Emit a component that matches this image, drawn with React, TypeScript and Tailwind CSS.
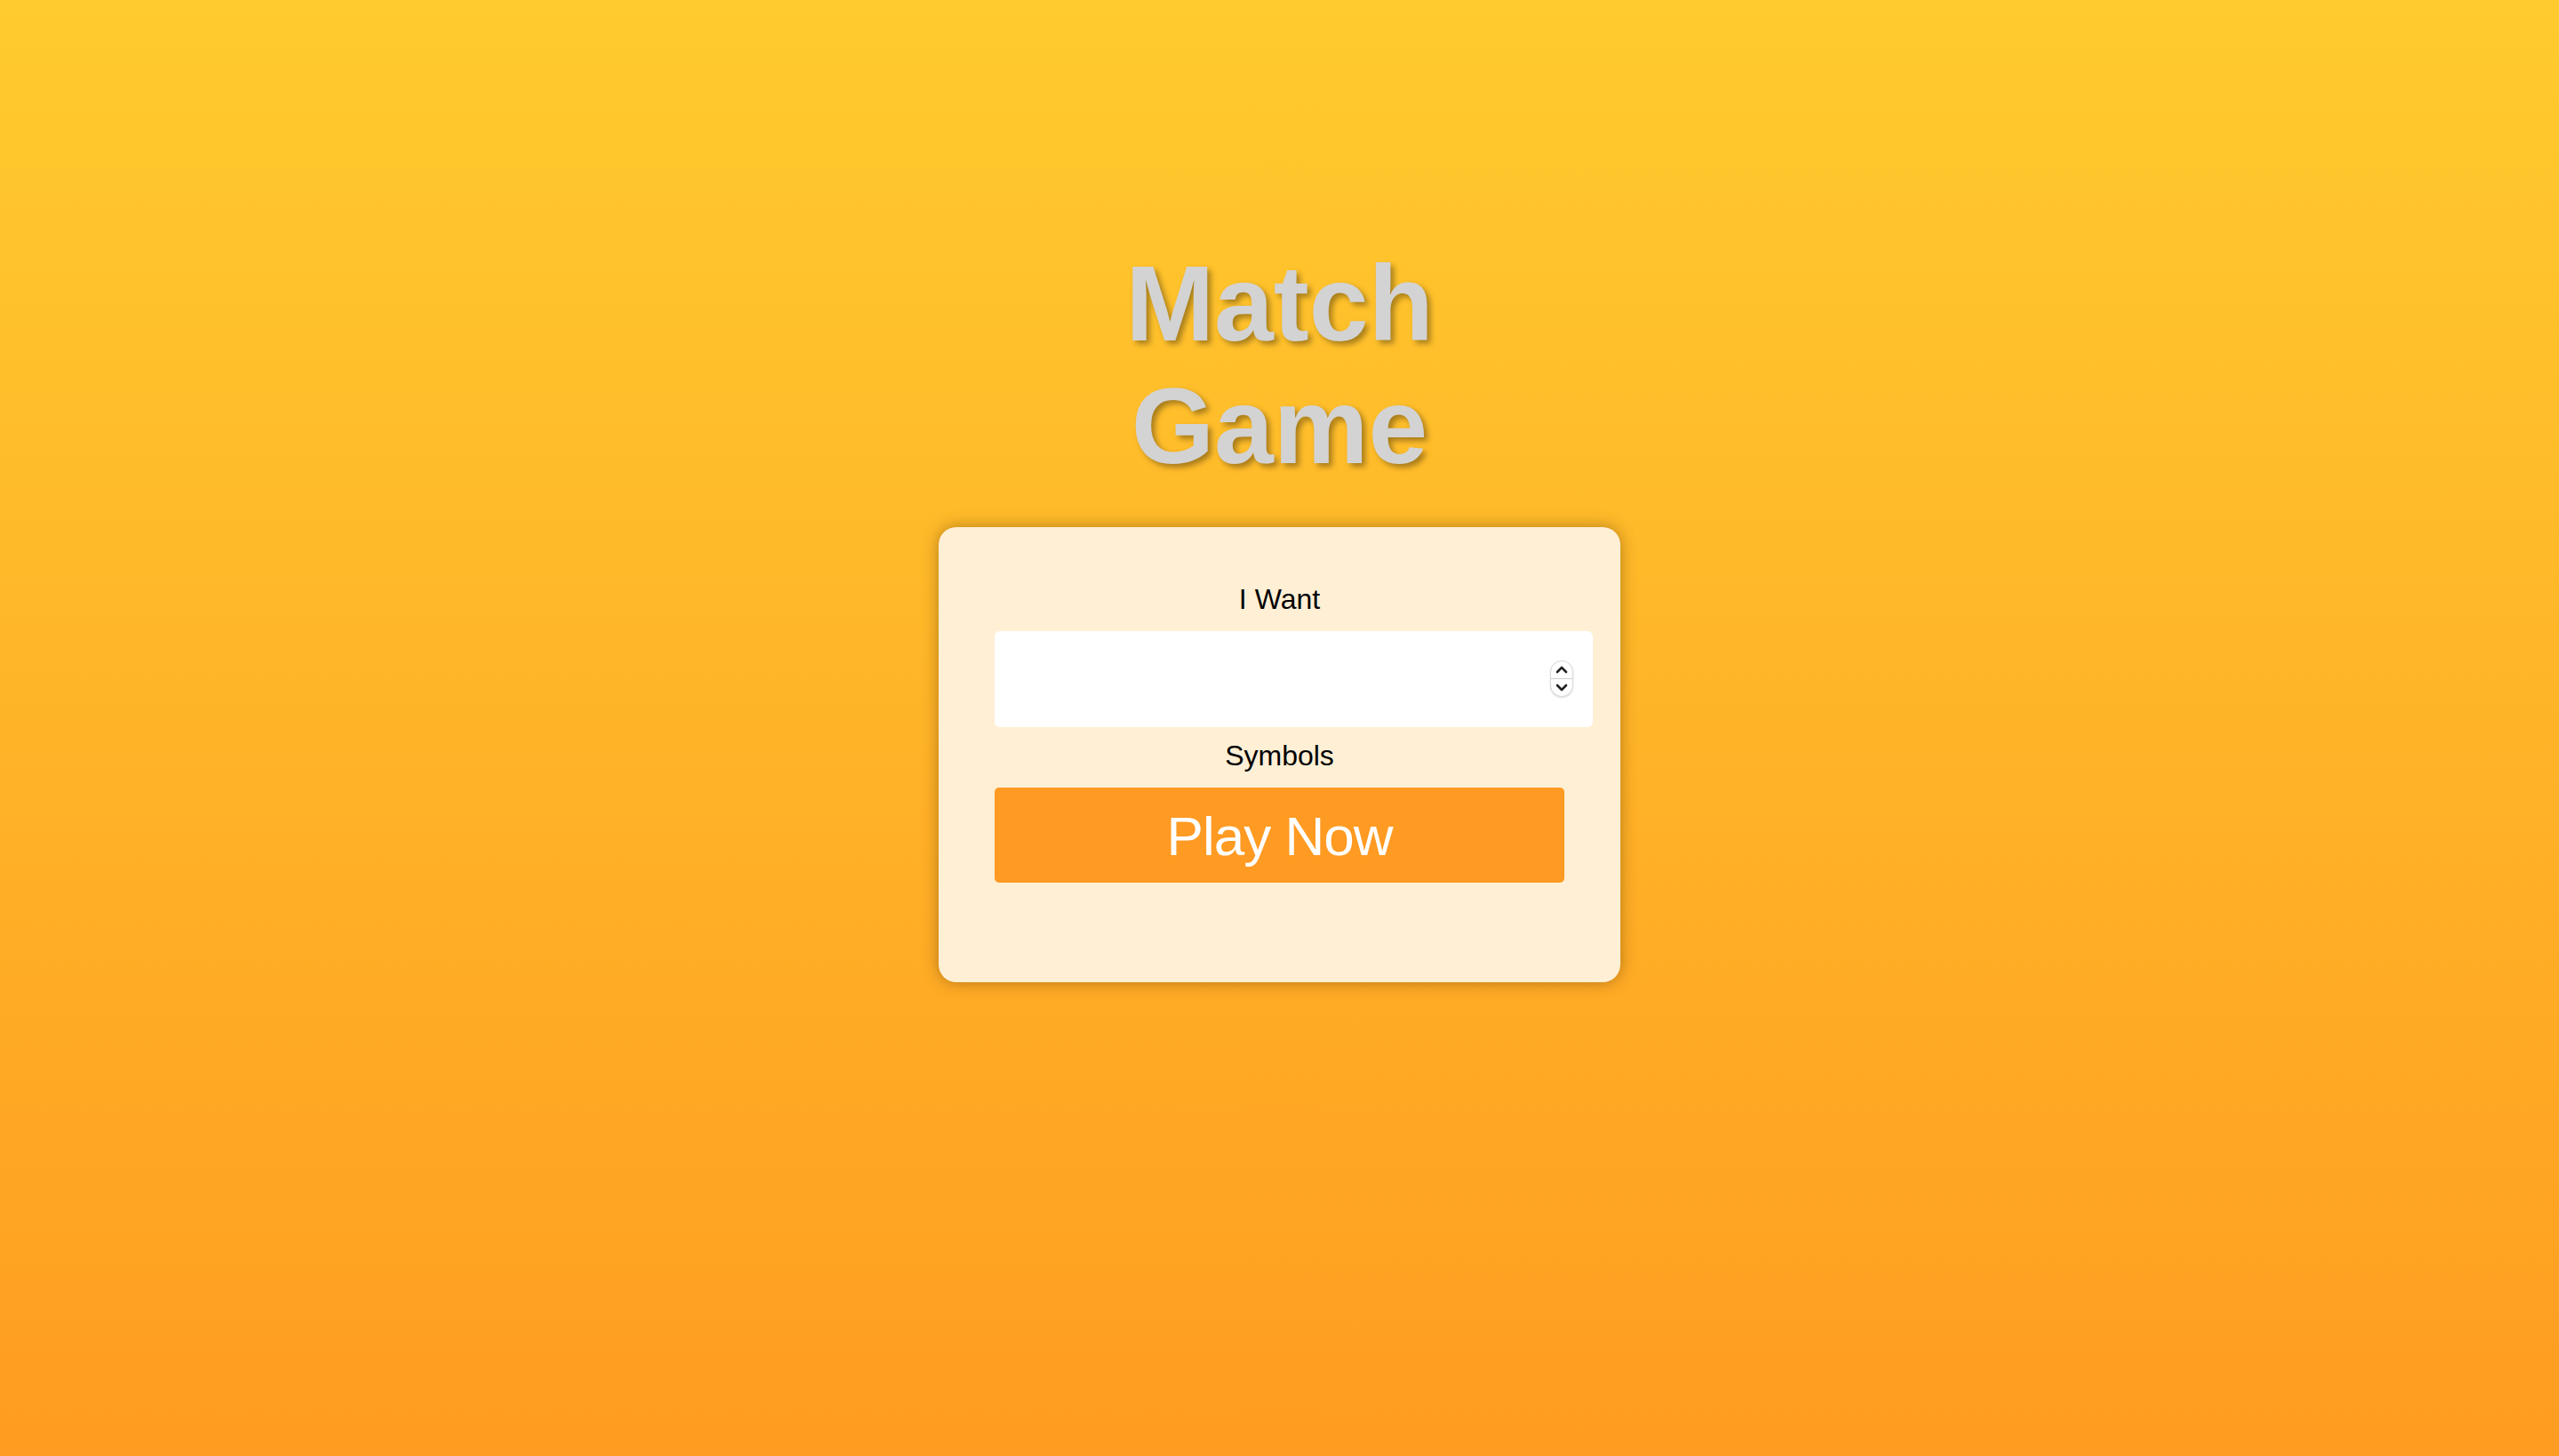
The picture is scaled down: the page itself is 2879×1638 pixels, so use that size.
import React from 'react';

export default function App() {
  const [count, setCount] = React.useState('');

  return (
    <div
      className="min-h-screen w-full flex flex-col items-center bg-gradient-to-b from-[#ffcb2e] to-[#ff9c21] pt-[272px]"
      style={{ fontFamily: '"Liberation Sans", Arial, sans-serif' }}
    >
      {/* Title */}
      <h1 className="max-w-[420px] text-center text-[120px] font-bold leading-[138px] text-[#d3d3d3] [text-shadow:4px_4px_6px_rgba(0,0,0,0.35)]">
        Match Game
      </h1>

      {/* Setup card */}
      <div className="mt-[45px] w-[767px] h-[512px] rounded-[20px] bg-[#ffefd5] shadow-[0_0_18px_rgba(90,50,0,0.45)] pt-[63px] flex flex-col">
        <label className="text-center text-[32px] leading-[37px] text-black">I Want</label>

        <div className="pl-[63px] mt-[17px]">
          <div className="relative w-[673px] h-[108px]">
            <input
              type="text"
              value={count}
              onChange={(e) => setCount(e.target.value)}
              className="w-full h-full rounded-[6px] bg-white px-4 text-[32px] outline-none"
            />
            {/* Number spinner */}
            <div className="absolute right-[22px] top-[33px] w-[26px] h-[41px] rounded-full bg-white border border-[#dadada] shadow-[0_1px_2px_rgba(0,0,0,0.15)] flex flex-col overflow-hidden">
              <div className="flex-1 flex items-center justify-center border-b border-[#cfcfcf]">
                <svg width="14" height="9" viewBox="0 0 14 9" fill="none">
                  <path d="M2 7L7 2l5 5" stroke="#222" strokeWidth="2.6" strokeLinecap="round" strokeLinejoin="round" />
                </svg>
              </div>
              <div className="flex-1 flex items-center justify-center">
                <svg width="14" height="9" viewBox="0 0 14 9" fill="none">
                  <path d="M2 2l5 5 5-5" stroke="#222" strokeWidth="2.6" strokeLinecap="round" strokeLinejoin="round" />
                </svg>
              </div>
            </div>
          </div>
        </div>

        <label className="mt-[14px] text-center text-[32px] leading-[37px] text-black">Symbols</label>

        <div className="pl-[63px] mt-[17px]">
          <button className="w-[641px] h-[107px] rounded-[5px] bg-[#ff9a22] pt-[3px] text-white text-[62px] tracking-[-1px] leading-none">
            Play Now
          </button>
        </div>
      </div>
    </div>
  );
}
